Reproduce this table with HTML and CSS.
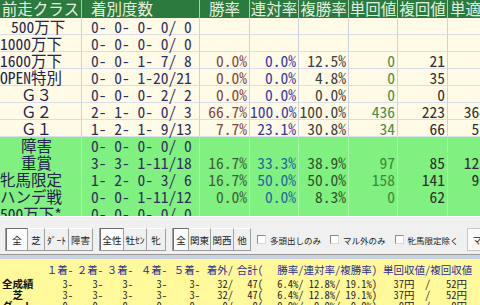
FILE: index.html
```html
<!DOCTYPE html>
<html lang="ja">
<head>
<meta charset="utf-8">
<title>前走クラス</title>
<link rel="stylesheet" href="styles.css">
</head>
<body>
<div class="app">
  <div class="grid-wrap">
    <div class="row head">
      <div class="h">前走クラス</div><div class="h h-rec">着別度数</div><div class="h">勝率</div><div class="h">連対率</div><div class="h">複勝率</div><div class="h">単回値</div><div class="h">複回値</div><div class="h h-last">単適値</div>
    </div>
    <div class="row">
      <div class="c cls i1">500万下</div><div class="c rec">0- 0- 0- 0/ 0</div><div class="c"></div><div class="c"></div><div class="c"></div><div class="c"></div><div class="c"></div><div class="c"></div>
    </div>
    <div class="row">
      <div class="c cls">1000万下</div><div class="c rec">0- 0- 0- 0/ 0</div><div class="c"></div><div class="c"></div><div class="c"></div><div class="c"></div><div class="c"></div><div class="c"></div>
    </div>
    <div class="row">
      <div class="c cls">1600万下</div><div class="c rec">0- 0- 1- 7/ 8</div><div class="c n win">0.0%</div><div class="c n ren">0.0%</div><div class="c n fuk">12.5%</div><div class="c n tan">0</div><div class="c n fkv">21</div><div class="c n tt"></div>
    </div>
    <div class="row">
      <div class="c cls">OPEN特別</div><div class="c rec">0- 0- 1-20/21</div><div class="c n win">0.0%</div><div class="c n ren">0.0%</div><div class="c n fuk">4.8%</div><div class="c n tan">0</div><div class="c n fkv">35</div><div class="c n tt"></div>
    </div>
    <div class="row">
      <div class="c cls i2 kana">Ｇ３</div><div class="c rec">0- 0- 0- 2/ 2</div><div class="c n win">0.0%</div><div class="c n ren">0.0%</div><div class="c n fuk">0.0%</div><div class="c n tan">0</div><div class="c n fkv">0</div><div class="c n tt"></div>
    </div>
    <div class="row">
      <div class="c cls i2 kana">Ｇ２</div><div class="c rec">2- 1- 0- 0/ 3</div><div class="c n win">66.7%</div><div class="c n ren">100.0%</div><div class="c n fuk">100.0%</div><div class="c n tan">436</div><div class="c n fkv">223</div><div class="c n tt">364</div>
    </div>
    <div class="row">
      <div class="c cls i2 kana">Ｇ１</div><div class="c rec">1- 2- 1- 9/13</div><div class="c n win">7.7%</div><div class="c n ren">23.1%</div><div class="c n fuk">30.8%</div><div class="c n tan">34</div><div class="c n fkv">66</div><div class="c n tt">57</div>
    </div>
    <div class="row g">
      <div class="c cls i2">障害</div><div class="c rec">0- 0- 0- 0/ 0</div><div class="c"></div><div class="c"></div><div class="c"></div><div class="c"></div><div class="c"></div><div class="c"></div>
    </div>
    <div class="row g">
      <div class="c cls i2">重賞</div><div class="c rec">3- 3- 1-11/18</div><div class="c n win">16.7%</div><div class="c n ren">33.3%</div><div class="c n fuk">38.9%</div><div class="c n tan">97</div><div class="c n fkv">85</div><div class="c n tt">123</div>
    </div>
    <div class="row g">
      <div class="c cls">牝馬限定</div><div class="c rec">1- 2- 0- 3/ 6</div><div class="c n win">16.7%</div><div class="c n ren">50.0%</div><div class="c n fuk">50.0%</div><div class="c n tan">158</div><div class="c n fkv">141</div><div class="c n tt">96</div>
    </div>
    <div class="row g">
      <div class="c cls kana">ハンデ戦</div><div class="c rec">0- 0- 1-11/12</div><div class="c n win">0.0%</div><div class="c n ren">0.0%</div><div class="c n fuk">8.3%</div><div class="c n tan">0</div><div class="c n fkv">62</div><div class="c n tt"></div>
    </div>
    <div class="row g">
      <div class="c cls">500万下*</div><div class="c rec">0- 0- 0- 0/ 0</div><div class="c"></div><div class="c"></div><div class="c"></div><div class="c"></div><div class="c"></div><div class="c"></div>
    </div>
  </div>

  <div class="toolbar">
    <div class="seg">
      <span class="btn on w22">全</span><span class="btn w17">芝</span><span class="btn w24">ﾀﾞｰﾄ</span><span class="btn w24">障害</span>
    </div>
    <div class="seg">
      <span class="btn on w24">全性</span><span class="btn w23">牡ｾﾝ</span><span class="btn w19">牝</span>
    </div>
    <div class="seg">
      <span class="btn on w16">全</span><span class="btn w22">関東</span><span class="btn w23">関西</span><span class="btn w17">他</span>
    </div>
    <label class="chk"><span class="box"></span>多頭出しのみ</label>
    <label class="chk"><span class="box"></span>マル外のみ</label>
    <label class="chk"><span class="box"></span>牝馬限定除く</label>
    <span class="btn mark">マーク</span>
  </div>
  <div class="split"></div>

  <div class="summary">
    <div class="srow shead">
      <span class="lbl"></span><span class="v">１着-</span><span class="v">２着-</span><span class="v">３着-</span><span class="v">４着-</span><span class="v">５着-</span><span class="v">着外/</span><span class="v">合計(</span><span class="v">勝率/連対率/複勝率)</span><span class="m">単回収値/複回収値</span>
    </div>
    <div class="srow">
      <span class="lbl">全成績</span><span class="v">3-</span><span class="v">3-</span><span class="v">3-</span><span class="v">3-</span><span class="v">3-</span><span class="v">32/</span><span class="v">47(</span><span class="v"> 6.4%/ 12.8%/ 19.1%)</span><span class="m">  37円  /   52円</span>
    </div>
    <div class="srow">
      <span class="lbl">　芝</span><span class="v">3-</span><span class="v">3-</span><span class="v">3-</span><span class="v">3-</span><span class="v">3-</span><span class="v">32/</span><span class="v">47(</span><span class="v"> 6.4%/ 12.8%/ 19.1%)</span><span class="m">  37円  /   52円</span>
    </div>
    <div class="srow">
      <span class="lbl">ダート</span><span class="v">0-</span><span class="v">0-</span><span class="v">0-</span><span class="v">0-</span><span class="v">0-</span><span class="v">0/</span><span class="v">0(</span><span class="v"> 0.0%/  0.0%/  0.0%)</span><span class="m">   0円  /    0円</span>
    </div>
  </div>
</div>
</body>
</html>
```

FILE: styles.css
```css
* {
  box-sizing: border-box;
  margin: 0;
  padding: 0;
}

html, body {
  width: 480px;
  height: 305px;
  overflow: hidden;
}

body {
  background: #f0f0f0;
  font-family: "Noto Sans Mono CJK JP", "Noto Sans CJK JP", sans-serif;
}

.app {
  width: 480px;
  height: 305px;
  overflow: hidden;
}

/* ---------- main grid ---------- */
.grid-wrap {
  height: 217px;
  overflow: hidden;
  background: #f3f6fa;
  border-bottom: 1px solid #ffffff;
}

.row {
  display: grid;
  grid-template-columns: 82px 118px 50px 49px 50px 49px 50px 42px;
  width: 490px;
  height: 17px;
  font-size: 15.5px;
  line-height: 16px;
  white-space: pre;
  background: #fffbe6;
}

.row.head {
  height: 18px;
  line-height: 17px;
  background: #2c7a3d;
}

.h {
  color: #e2f1e2;
  text-align: center;
  border-right: 1px solid #a9cbb0;
}

.h-rec {
  text-align: left;
  padding-left: 9px;
}

.h-last {
  text-align: left;
  padding-left: 2px;
  border-right: none;
}

.c {
  border-right: 1px solid #cfd3dc;
  border-bottom: 1px solid #dadee8;
  font-feature-settings: "hwid" 1;
}

.row.g {
  background: #80f080;
}

.row.g .c {
  border-right-color: #a6f3a6;
  border-bottom-color: #86f086;
}

.cls {
  color: #23234e;
  padding-left: 0;
}

.cls.i1 {
  padding-left: 11px;
}

.cls.i2 {
  padding-left: 21px;
}

.cls.kana {
  font-feature-settings: normal;
}

.rec {
  color: #2f2f5c;
  padding-left: 9px;
}

.n {
  text-align: right;
  padding-right: 2px;
}

.win { color: #84463e; }
.ren { color: #3737a6; }
.fuk { color: #3e3e3e; }
.tan { color: #4b8a4b; }
.fkv { color: #2e2e2e; }
.tt  { color: #2e2e2e; }

.row.g .win { color: #3f5e36; }
.row.g .ren { color: #1f67a3; }
.row.g .fuk { color: #2a552a; }
.row.g .tan { color: #3a8a3a; }

/* ---------- toolbar ---------- */
.toolbar {
  height: 38px;
  display: flex;
  align-items: flex-start;
  padding: 11px 0 0 5px;
  border-bottom: 1px solid #9a9a9a;
  font-size: 9.5px;
  color: #1a1a1a;
}

.seg {
  display: flex;
  height: 23px;
  border-left: 1px solid #9c9c9c;
  border-bottom: 1px solid #9c9c9c;
  margin-right: 6px;
}

.btn {
  display: flex;
  align-items: center;
  justify-content: center;
  height: 22px;
  background: #f0f0f0;
  border-top: 1px solid #ffffff;
  border-right: 1px solid #a0a0a0;
  white-space: nowrap;
}

.btn.on {
  background: #fbfbfb;
  border-top: 1px solid #6e6e6e;
  border-left: 1px solid #6e6e6e;
}

.w16 { width: 16px; }
.w17 { width: 17px; }
.w19 { width: 19px; }
.w22 { width: 22px; }
.w23 { width: 23px; }
.w24 { width: 24px; }

.chk {
  display: flex;
  align-items: center;
  height: 23px;
  font-size: 8.5px;
  margin-right: 9px;
  white-space: nowrap;
}

.box {
  width: 9px;
  height: 9px;
  margin-right: 4px;
  background: #ffffff;
  border: 1px solid #8a8a8a;
  border-right-color: #d8d8d8;
  border-bottom-color: #d8d8d8;
}

.btn.mark {
  width: 40px;
  height: 23px;
  margin-left: -1px;
  background: #f9f9f9;
  border: 1px solid #c8c8c8;
  justify-content: flex-start;
  padding-left: 5px;
  font-size: 9.5px;
}

.split {
  height: 4px;
  background: #c9d3dd;
}

/* ---------- summary ---------- */
.summary {
  height: 46px;
  background: #fff99c;
  padding-top: 5px;
  font-size: 10.5px;
  overflow: hidden;
}

.srow {
  display: grid;
  grid-template-columns: 45px 28px 30px 30px 34px 33px 33px 30px 114px 103px;
  height: 11px;
  line-height: 11px;
  white-space: pre;
  color: #262626;
  font-feature-settings: "hwid" 1;
}

.srow.shead {
  height: 12px;
  margin-bottom: 2px;
  color: #2c2c94;
  font-feature-settings: normal;
}

.lbl {
  font-weight: bold;
  color: #111111;
  padding-left: 2px;
  font-feature-settings: normal;
}

.v {
  text-align: right;
}

.m {
  padding-left: 6px;
}
```
